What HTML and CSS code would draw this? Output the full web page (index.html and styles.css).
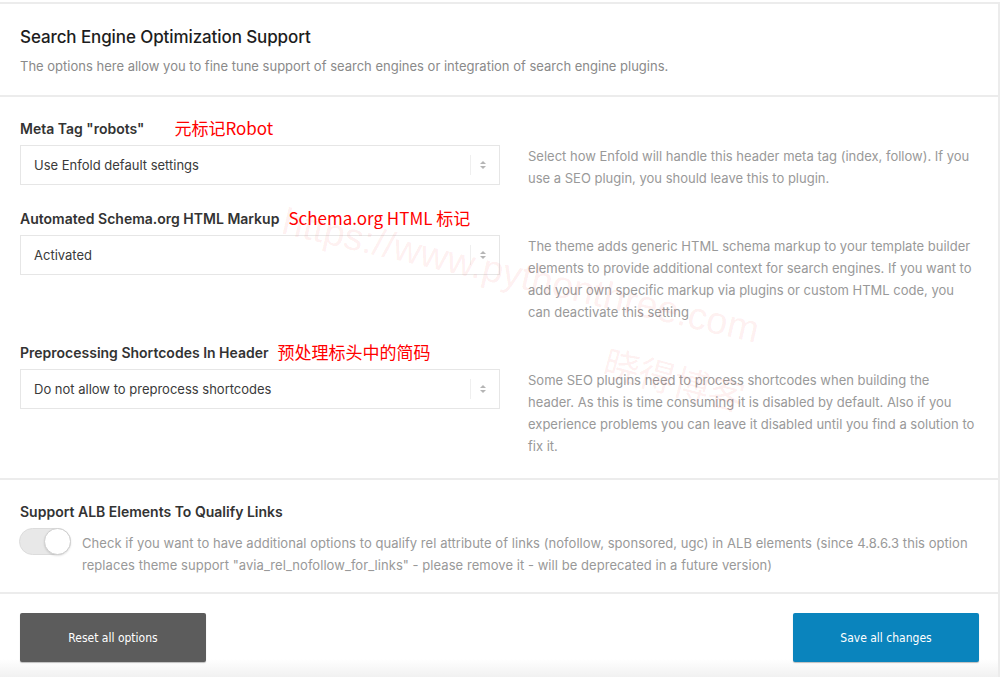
FILE: index.html
```html
<!DOCTYPE html>
<html lang="en">
<head>
    <meta charset="UTF-8">
    <meta name="viewport" content="width=device-width, initial-scale=1.0">
    <title>Search Engine Optimization Support</title>
    <link rel="stylesheet" href="styles.css">
</head>
<body>
    <div class="panel">
        <div class="section intro">
            <h2 class="title">Search Engine Optimization Support</h2>
            <p class="subtitle">The options here allow you to fine tune support of search engines or integration of search engine plugins.</p>
        </div>

        <div class="section options">
            <div class="option">
                <div class="label">Meta Tag "robots" <span class="note note-wide">元标记Robot</span></div>
                <div class="option-body">
                    <div class="select">
                        <span class="select-text">Use Enfold default settings</span>
                        <span class="select-arrows"></span>
                    </div>
                    <div class="desc">Select how Enfold will handle this header meta tag (index, follow). If you use a SEO plugin, you should leave this to plugin.</div>
                </div>
            </div>

            <div class="option">
                <div class="label">Automated Schema.org HTML Markup <span class="note">Schema.org HTML 标记</span></div>
                <div class="option-body">
                    <div class="select">
                        <span class="select-text">Activated</span>
                        <span class="select-arrows"></span>
                    </div>
                    <div class="desc">The theme adds generic HTML schema markup to your template builder elements to provide additional context for search engines. If you want to add your own specific markup via plugins or custom HTML code, you can deactivate this setting</div>
                </div>
            </div>

            <div class="option">
                <div class="label">Preprocessing Shortcodes In Header <span class="note">预处理标头中的简码</span></div>
                <div class="option-body">
                    <div class="select">
                        <span class="select-text">Do not allow to preprocess shortcodes</span>
                        <span class="select-arrows"></span>
                    </div>
                    <div class="desc">Some SEO plugins need to process shortcodes when building the header. As this is time consuming it is disabled by default. Also if you experience problems you can leave it disabled until you find a solution to fix it.</div>
                </div>
            </div>
        </div>

        <div class="section switch-section">
            <div class="label">Support ALB Elements To Qualify Links</div>
            <div class="switch-row">
                <span class="switch"><span class="knob"></span></span>
                <div class="desc">Check if you want to have additional options to qualify rel attribute of links (nofollow, sponsored, ugc) in ALB elements (since 4.8.6.3 this option replaces theme support "avia_rel_nofollow_for_links" - please remove it - will be deprecated in a future version)</div>
            </div>
        </div>

        <div class="footer">
            <button class="button button-reset">Reset all options</button>
            <button class="button button-save">Save all changes</button>
        </div>

        <div class="watermark">
            <span class="wm-url">https://www.pythonthree.com</span>
            <span class="wm-name">晓得博客</span>
        </div>
    </div>
</body>
</html>
```

FILE: styles.css
```css
body {
    margin: 0;
    background: #fff;
    font-family: Inter, "Noto Sans", sans-serif;
    color: #333;
    overflow: hidden;
}
.panel {
    position: relative;
    width: 998px;
    margin-top: 2px;
    border-top: 2px solid #ececec;
    border-right: 2px solid #ececec;
    background: #fff;
}
.section {
    padding: 22px 20px 20px 20px;
    border-bottom: 2px solid #ececec;
}
.intro {
    padding-top: 22px;
    padding-bottom: 19px;
}
.title {
    margin: 0 0 8px 0;
    font-size: 17px;
    line-height: 22px;
    font-weight: 500;
    color: #1d1d1d;
    letter-spacing: -0.1px;
}
.subtitle {
    margin: 0;
    font-size: 13px;
    line-height: 20px;
    color: #8a8a8a;
}
.options {
    padding-top: 22px;
    padding-bottom: 21px;
    display: flex;
    flex-direction: column;
    gap: 20px;
}
.label {
    display: flex;
    align-items: center;
    height: 18px;
    font-size: 14px;
    font-weight: 600;
    color: #333;
    margin-bottom: 8px;
    white-space: nowrap;
}
.note {
    font-family: "Noto Sans CJK SC", sans-serif;
    font-weight: 400;
    font-size: 17px;
    color: #f00;
    margin-left: 9px;
    margin-top: -1px;
}
.note-wide {
    margin-left: 30px;
}
.option-body {
    display: grid;
    grid-template-columns: 480px 1fr;
    column-gap: 28px;
}
.select {
    height: 40px;
    box-sizing: border-box;
    border: 1px solid #e6e6e6;
    display: flex;
    align-items: center;
    padding: 0 10px 0 13px;
    font-size: 13px;
    color: #3a3a3a;
}
.select-text {
    flex: 1;
}
.select-arrows {
    position: relative;
    width: 18px;
    height: 20px;
    border-left: 1px solid #efefef;
}
.select-arrows::before,
.select-arrows::after {
    content: "";
    position: absolute;
    left: 9px;
    border-left: 3px solid transparent;
    border-right: 3px solid transparent;
}
.select-arrows::before {
    top: 6px;
    border-bottom: 3px solid #b5b5b5;
}
.select-arrows::after {
    top: 11px;
    border-top: 3px solid #b5b5b5;
}
.desc {
    font-size: 13px;
    line-height: 22px;
    color: #999;
    padding-right: 2px;
}
.switch-section {
    padding-top: 22px;
    padding-bottom: 16px;
}
.switch-row {
    display: flex;
    gap: 11px;
    align-items: flex-start;
}
.switch-row .desc {
    margin-top: 4px;
    letter-spacing: 0.05px;
}
.switch {
    position: relative;
    flex: none;
    width: 52px;
    height: 27px;
    box-sizing: border-box;
    border-radius: 14px;
    background: #e8e8e8;
    border: 1px solid #dcdcdc;
    margin-left: -1px;
}
.knob {
    position: absolute;
    top: -1px;
    right: -1px;
    width: 27px;
    height: 27px;
    box-sizing: border-box;
    border-radius: 50%;
    background: #fff;
    border: 1px solid #cfcfcf;
    box-shadow: 0 1px 2px rgba(0, 0, 0, 0.12);
}
.footer {
    display: flex;
    justify-content: space-between;
    padding: 19px 19px 15px 20px;
    background: linear-gradient(#fff 0, #fff 65px, #f1f1f1 100%);
}
.button {
    width: 186px;
    height: 49px;
    border: none;
    border-radius: 2px;
    color: #fff;
    font-family: "DejaVu Sans Condensed", "Open Sans", sans-serif;
    font-size: 12px;
    cursor: pointer;
    box-shadow: 0 1px 1px rgba(0, 0, 0, 0.25);
}
.button-reset {
    background: #5c5c5c;
}
.button-save {
    background: #0a84bd;
}
.watermark {
    position: absolute;
    left: 0;
    top: 0;
    pointer-events: none;
    color: rgba(240, 40, 40, 0.08);
}
.wm-url {
    position: absolute;
    left: 288px;
    top: 196px;
    font-family: "Liberation Sans", sans-serif;
    font-size: 38px;
    white-space: nowrap;
    transform: rotate(13deg);
    transform-origin: left top;
}
.wm-name {
    position: absolute;
    left: 612px;
    top: 330px;
    font-family: "Noto Sans CJK SC", sans-serif;
    font-size: 36px;
    white-space: nowrap;
    transform: rotate(15deg);
    transform-origin: left top;
}
```
